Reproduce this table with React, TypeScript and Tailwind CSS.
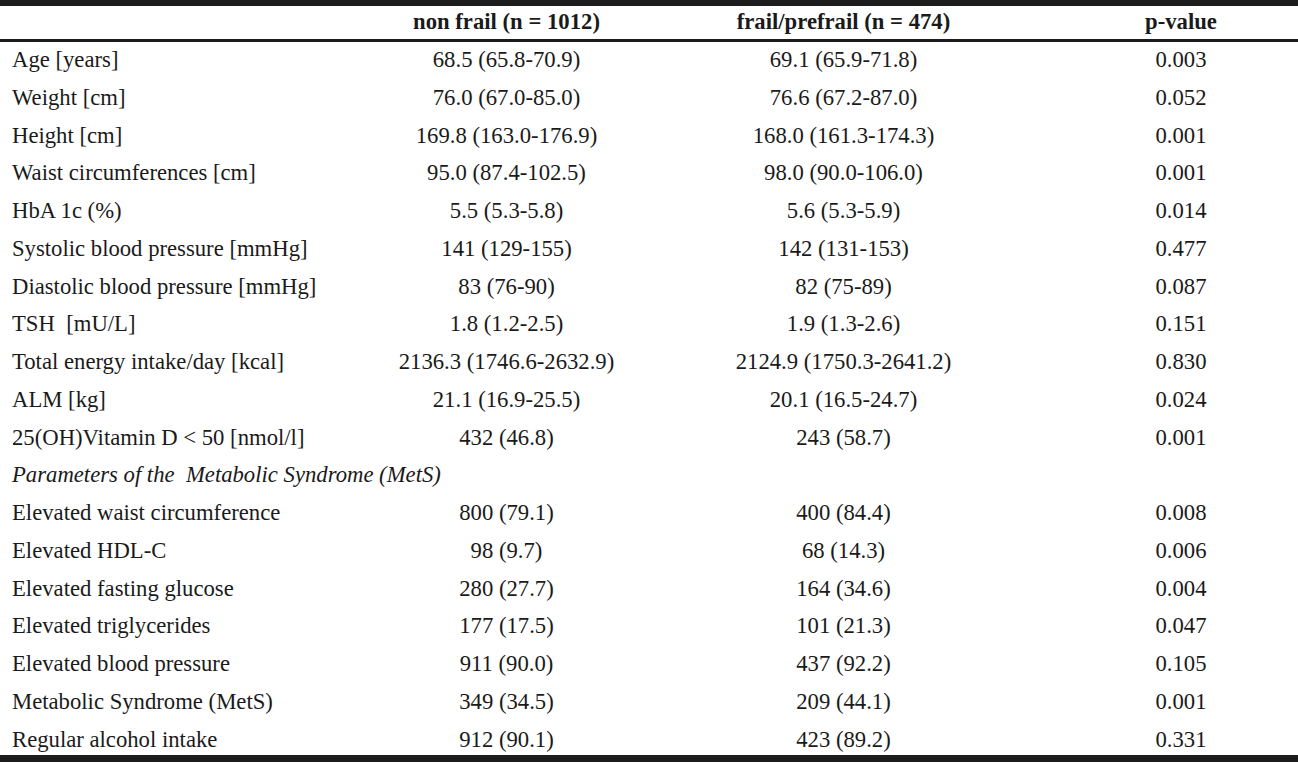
import React from 'react';

// rows of the comparison table: label, non frail, frail/prefrail, p-value
type Row = { label: string; a?: string; b?: string; p?: string; italic?: boolean };

const ROWS: Row[] = [
  { label: 'Age [years]', a: '68.5 (65.8-70.9)', b: '69.1 (65.9-71.8)', p: '0.003' },
  { label: 'Weight [cm]', a: '76.0 (67.0-85.0)', b: '76.6 (67.2-87.0)', p: '0.052' },
  { label: 'Height [cm]', a: '169.8 (163.0-176.9)', b: '168.0 (161.3-174.3)', p: '0.001' },
  { label: 'Waist circumferences [cm]', a: '95.0 (87.4-102.5)', b: '98.0 (90.0-106.0)', p: '0.001' },
  { label: 'HbA 1c (%)', a: '5.5 (5.3-5.8)', b: '5.6 (5.3-5.9)', p: '0.014' },
  { label: 'Systolic blood pressure [mmHg]', a: '141 (129-155)', b: '142 (131-153)', p: '0.477' },
  { label: 'Diastolic blood pressure [mmHg]', a: '83 (76-90)', b: '82 (75-89)', p: '0.087' },
  { label: 'TSH\u00a0 [mU/L]', a: '1.8 (1.2-2.5)', b: '1.9 (1.3-2.6)', p: '0.151' },
  { label: 'Total energy intake/day [kcal]', a: '2136.3 (1746.6-2632.9)', b: '2124.9 (1750.3-2641.2)', p: '0.830' },
  { label: 'ALM [kg]', a: '21.1 (16.9-25.5)', b: '20.1 (16.5-24.7)', p: '0.024' },
  { label: '25(OH)Vitamin D < 50 [nmol/l]', a: '432 (46.8)', b: '243 (58.7)', p: '0.001' },
  { label: 'Parameters of the\u00a0 Metabolic Syndrome (MetS)', italic: true },
  { label: 'Elevated waist circumference', a: '800 (79.1)', b: '400 (84.4)', p: '0.008' },
  { label: 'Elevated HDL-C', a: '98 (9.7)', b: '68 (14.3)', p: '0.006' },
  { label: 'Elevated fasting glucose', a: '280 (27.7)', b: '164 (34.6)', p: '0.004' },
  { label: 'Elevated triglycerides', a: '177 (17.5)', b: '101 (21.3)', p: '0.047' },
  { label: 'Elevated blood pressure', a: '911 (90.0)', b: '437 (92.2)', p: '0.105' },
  { label: 'Metabolic Syndrome (MetS)', a: '349 (34.5)', b: '209 (44.1)', p: '0.001' },
  { label: 'Regular alcohol intake', a: '912 (90.1)', b: '423 (89.2)', p: '0.331' },
];

const GRID = 'grid grid-cols-[390px_233px_441px_234px]';

export default function App() {
  return (
    <div
      className="w-[1298px] h-[762px] overflow-hidden bg-white text-[#1a1a1a] text-[22.7px] leading-[25px]"
      style={{ fontFamily: '"Liberation Serif", "Times New Roman", serif' }}
    >
      <div className="h-[5.5px] bg-[#1c1c1c]" />
      {/* Header */}
      <div className={`${GRID} h-[33.5px] pt-[3px] font-bold whitespace-nowrap`}>
        <div />
        <div className="text-center">non frail (n = 1012)</div>
        <div className="text-center">frail/prefrail (n = 474)</div>
        <div className="text-center">p-value</div>
      </div>
      <div className="h-[3px] bg-[#1c1c1c]" />
      {/* Body */}
      {ROWS.map((r, i) => (
        <div
          key={i}
          className={`${GRID} ${i === ROWS.length - 1 ? 'h-[33.5px]' : 'h-[37.75px]'} pt-[5px] whitespace-nowrap`}
        >
          <div className={`pl-[12px] ${r.italic ? 'italic' : ''}`}>{r.label}</div>
          <div className="text-center">{r.a}</div>
          <div className="text-center">{r.b}</div>
          <div className="text-center">{r.p}</div>
        </div>
      ))}
      <div className="h-[8px] bg-[#1c1c1c]" />
    </div>
  );
}
